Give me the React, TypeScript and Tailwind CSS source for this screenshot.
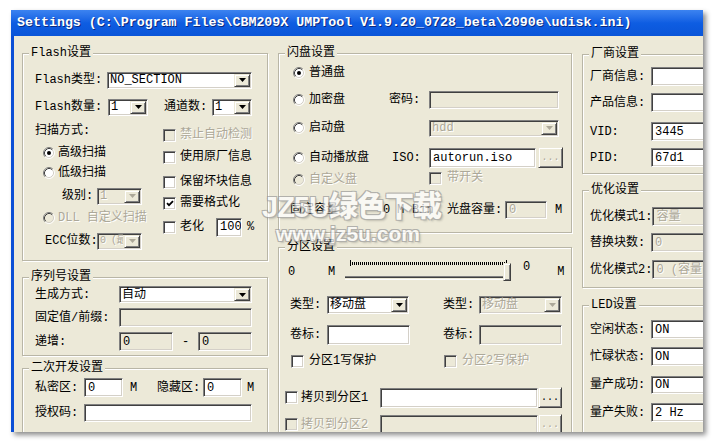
import type { ReactNode } from 'react'

const dis = 'text-[#aca899] [text-shadow:1px_1px_0_#fff]'
const sunken = 'border border-[#808080] border-b-white border-r-white shadow-[inset_1px_1px_0_#404040,inset_-1px_-1px_0_#d4d0c8]'
const raised = 'border border-[#ece9d8] border-b-[#404040] border-r-[#404040] shadow-[inset_1px_1px_0_#fff,inset_-1px_-1px_0_#808080]'

type Box = { className?: string; value?: string; disabled?: boolean; grey?: boolean; tight?: boolean }

function Group({ title, className = '', children }: { title: string; className?: string; children?: ReactNode }) {
    return (
        <div className={`shrink-0 border border-[#b9b6a6] shadow-[inset_1px_1px_0_#fff,1px_1px_0_#fff] ${className}`}>
            <div className="-mt-[9px] ml-[6px] px-[2px] h-[16px] leading-[16px] w-fit bg-[#ece9d8]">{title}</div>
            {children}
        </div>
    )
}

function Row({ className = '', children }: { className?: string; children?: ReactNode }) {
    return <div className={`flex items-center whitespace-nowrap ${className}`}>{children}</div>
}

function Field({ className = '', value = '', disabled = false, grey = false }: Box) {
    return (
        <div className={`flex items-center shrink-0 overflow-hidden whitespace-nowrap pl-[3px] ${sunken} ${disabled ? 'bg-[#ece9d8] ' + dis : grey ? 'bg-[#ece9d8]' : 'bg-white'} ${className}`}>
            {value}
        </div>
    )
}

function Combo({ className = '', value = '', disabled = false, tight = false }: Box) {
    return (
        <div className={`flex items-stretch shrink-0 ${sunken} ${disabled ? 'bg-[#ece9d8] ' + dis : 'bg-white'} ${className}`}>
            <div className={`flex-1 flex items-center pl-[2px] overflow-hidden whitespace-nowrap ${tight ? 'text-[10px] tracking-[-0.5px]' : ''}`}>{value}</div>
            <div className={`w-[16px] m-[1px] flex items-center justify-center bg-[#ece9d8] ${raised}`}>
                <svg width="7" height="4" viewBox="0 0 7 4">
                    <path d="M0 0h7L3.5 4z" fill={disabled ? '#aca899' : '#000'} />
                </svg>
            </div>
        </div>
    )
}

function Dots({ className = '', disabled = false }: Box) {
    return (
        <div className={`flex items-center justify-center shrink-0 bg-[#ece9d8] text-[10px] ${raised} ${disabled ? dis : ''} ${className}`}>
            ...
        </div>
    )
}

function Radio({ checked = false, disabled = false }: { checked?: boolean; disabled?: boolean }) {
    return (
        <svg width="12" height="12" viewBox="0 0 12 12" className="shrink-0">
            <circle cx="6" cy="6" r="5" fill={disabled ? '#ece9d8' : '#fff'} />
            <path d="M9.9 2.1A5.5 5.5 0 0 0 2.1 9.9" fill="none" stroke="#808080" />
            <path d="M9.9 2.1A5.5 5.5 0 0 1 2.1 9.9" fill="none" stroke="#fff" />
            <path d="M9.18 2.82A4.5 4.5 0 0 0 2.82 9.18" fill="none" stroke="#404040" />
            <path d="M9.18 2.82A4.5 4.5 0 0 1 2.82 9.18" fill="none" stroke="#d4d0c8" />
            {checked && <circle cx="6" cy="6" r="2" fill="#000" />}
        </svg>
    )
}

function Check({ checked = false, disabled = false }: { checked?: boolean; disabled?: boolean }) {
    return (
        <div className={`w-[13px] h-[13px] shrink-0 flex items-center justify-center ${sunken} ${disabled ? 'bg-[#ece9d8]' : 'bg-white'}`}>
            {checked && (
                <svg width="8" height="7" viewBox="0 0 8 7">
                    <path d="M1 3.2L3 5.2L7 1.2" stroke="#000" strokeWidth="1.8" fill="none" />
                </svg>
            )}
        </div>
    )
}

export default function App() {
    return (
        <div className="w-[715px] h-[441px] bg-white pt-[10px] pl-[11px] font-['Liberation_Mono','Noto_Sans_CJK_SC',monospace] text-[12px] leading-[16px] text-black">
            <div className="relative w-[692px] h-[422px] overflow-hidden bg-[#ece9d8] flex flex-col shadow-[3px_3px_5px_rgba(0,0,0,0.45)]">
                <div className="h-[26px] shrink-0 flex items-center pl-[6px] bg-linear-to-b from-[#3c83f0] via-[#0e5de2] to-[#0a55d8] text-white font-bold text-[13.3px] [text-shadow:1px_1px_0_#0a2a80] whitespace-nowrap">
                    Settings (C:\Program Files\CBM209X UMPTool V1.9.20_0728_beta\2090e\udisk.ini)
                </div>

                <div className="flex-1 flex gap-[10px] border-l-[3px] border-[#0b4fd6] pl-[8px] pt-[17px]">
                    {/* coluna esquerda */}
                    <div className="w-[246px] shrink-0 flex flex-col">
                        <Group title="Flash设置" className="h-[208px]">
                            <Row className="h-[20px] mt-[9px] pl-[12px]">
                                <span className="w-[72px]">Flash类型:</span>
                                <Combo className="w-[145px] h-[17px]" value="NO_SECTION" />
                            </Row>
                            <Row className="h-[20px] mt-[7px] pl-[12px]">
                                <span className="w-[73px]">Flash数量:</span>
                                <Combo className="w-[40px] h-[17px]" value="1" />
                                <span className="w-[48px] ml-[16px]">通道数:</span>
                                <Combo className="w-[40px] h-[17px]" value="1" />
                            </Row>
                            <div className="flex">
                                <div className="w-[140px] pl-[12px]">
                                    <Row className="h-[20px] mt-[4px]">扫描方式:</Row>
                                    <Row className="h-[20px] mt-[2px] pl-[8px]">
                                        <Radio checked />
                                        <span className="ml-[3px]">高级扫描</span>
                                    </Row>
                                    <Row className="h-[20px] pl-[8px]">
                                        <Radio />
                                        <span className="ml-[3px]">低级扫描</span>
                                    </Row>
                                    <Row className="h-[20px] mt-[3px] pl-[27px]">
                                        <span className="w-[35px]">级别:</span>
                                        <Combo className="w-[45px] h-[17px]" value="1" disabled />
                                    </Row>
                                    <Row className="h-[20px] mt-[2px] pl-[8px]">
                                        <Radio disabled />
                                        <span className={`ml-[3px] ${dis}`}>DLL 自定义扫描</span>
                                    </Row>
                                    <Row className="h-[20px] mt-[3px] pl-[10px]">
                                        <span className="w-[52px]">ECC位数:</span>
                                        <Combo className="w-[45px] h-[17px]" value="0 (最" disabled tight />
                                    </Row>
                                </div>
                                <div className="flex-1">
                                    <Row className="h-[20px] mt-[8px]">
                                        <Check disabled />
                                        <span className={`ml-[4px] ${dis}`}>禁止自动检测</span>
                                    </Row>
                                    <Row className="h-[20px] mt-[2px]">
                                        <Check />
                                        <span className="ml-[4px]">使用原厂信息</span>
                                    </Row>
                                    <Row className="h-[20px] mt-[5px]">
                                        <Check />
                                        <span className="ml-[4px]">保留坏块信息</span>
                                    </Row>
                                    <Row className="h-[20px] mt-[1px]">
                                        <Check checked />
                                        <span className="ml-[4px]">需要格式化</span>
                                    </Row>
                                    <Row className="h-[20px] mt-[4px]">
                                        <Check />
                                        <span className="ml-[4px] w-[36px]">老化</span>
                                        <Field className="w-[26px] h-[19px]" value="100" />
                                        <span className="ml-[5px]">%</span>
                                    </Row>
                                </div>
                            </div>
                        </Group>

                        <Group title="序列号设置" className="h-[79px] mt-[16px]">
                            <Row className="h-[17px] mt-[1px] pl-[12px]">
                                <span className="w-[84px]">生成方式:</span>
                                <Combo className="w-[133px] h-[17px]" value="自动" />
                            </Row>
                            <Row className="h-[19px] mt-[5px] pl-[12px]">
                                <span className="w-[84px]">固定值/前缀:</span>
                                <Field className="w-[133px] h-[19px]" disabled />
                            </Row>
                            <Row className="h-[19px] mt-[5px] pl-[12px]">
                                <span className="w-[84px]">递增:</span>
                                <Field className="w-[54px] h-[19px]" value="0" grey />
                                <span className="w-[25px] text-center">-</span>
                                <Field className="w-[54px] h-[19px]" value="0" grey />
                            </Row>
                        </Group>

                        <Group title="二次开发设置" className="h-[80px] mt-[12px]">
                            <Row className="h-[19px] mt-[2px] pl-[12px]">
                                <span className="w-[49px]">私密区:</span>
                                <Field className="w-[39px] h-[19px]" value="0" />
                                <span className="w-[34px] pl-[7px]">M</span>
                                <span className="w-[46px]">隐藏区:</span>
                                <Field className="w-[39px] h-[19px]" value="0" />
                                <span className="pl-[5px]">M</span>
                            </Row>
                            <Row className="h-[18px] mt-[7px] pl-[12px]">
                                <span className="w-[49px]">授权码:</span>
                                <Field className="w-[168px] h-[18px]" />
                            </Row>
                        </Group>
                    </div>

                    {/* coluna do meio */}
                    <div className="w-[294px] shrink-0 flex flex-col">
                        <Group title="闪盘设置" className="h-[180px]">
                            <Row className="h-[20px] mt-[2px] pl-[14px]">
                                <Radio checked />
                                <span className="ml-[4px]">普通盘</span>
                            </Row>
                            <Row className="h-[20px] mt-[7px] pl-[14px]">
                                <div className="w-[96px] flex items-center">
                                    <Radio />
                                    <span className="ml-[4px]">加密盘</span>
                                </div>
                                <span className="w-[40px]">密码:</span>
                                <Field className="w-[130px] h-[18px]" disabled />
                            </Row>
                            <Row className="h-[20px] mt-[8px] pl-[14px]">
                                <div className="w-[136px] flex items-center">
                                    <Radio />
                                    <span className="ml-[4px]">启动盘</span>
                                </div>
                                <Combo className="w-[130px] h-[17px]" value="hdd" disabled />
                            </Row>
                            <Row className="h-[21px] mt-[9px] pl-[14px]">
                                <div className="w-[99px] flex items-center">
                                    <Radio />
                                    <span className="ml-[4px]">自动播放盘</span>
                                </div>
                                <span className="w-[37px]">ISO:</span>
                                <Field className="w-[107px] h-[20px]" value="autorun.iso" />
                                <Dots className="w-[25px] h-[21px] ml-[2px]" disabled />
                            </Row>
                            <Row className="h-[20px] mt-[2px] pl-[14px]">
                                <div className="w-[136px] flex items-center">
                                    <Radio disabled />
                                    <span className={`ml-[4px] ${dis}`}>自定义盘</span>
                                </div>
                                <div className="flex items-center -mt-[4px]">
                                    <Check disabled />
                                    <span className={`ml-[5px] ${dis}`}>带开关</span>
                                </div>
                            </Row>
                            <Row className="h-[20px] mt-[10px] pl-[11px]">
                                <span className="w-[93px]">固定容量</span>
                                <span className="w-[14px]">0</span>
                                <span className="w-[15px]">M</span>
                                <span className="w-[35px]">Bin</span>
                                <span className="w-[58px]">光盘容量:</span>
                                <Field className="w-[42px] h-[18px]" value="0" disabled />
                                <span className="pl-[8px]">M</span>
                            </Row>
                        </Group>

                        <Group title="分区设置" className="h-[200px] mt-[14px]">
                            <div className="flex items-start h-[30px] pl-[9px] whitespace-nowrap">
                                <span className="w-[40px] mt-[9px]">0</span>
                                <span className="w-[17px] mt-[9px]">M</span>
                                <div className="relative w-[166px] h-[30px] shrink-0">
                                    <div className="absolute left-[5px] top-[7px] w-[157px] h-[3px] bg-[repeating-linear-gradient(90deg,#000_0_1px,transparent_1px_2px)]" />
                                    <div className="absolute left-[5px] top-[5px] w-[1px] h-[6px] bg-black" />
                                    <div className="absolute left-[161px] top-[5px] w-[1px] h-[6px] bg-black" />
                                    <div className="absolute left-0 top-[21px] w-[163px] h-[4px] border-t border-[#808080] border-b border-b-white shadow-[inset_0_1px_0_#404040]" />
                                    <div className={`absolute left-[158px] top-[8px] w-[8px] h-[18px] bg-[#ece9d8] ${raised}`} />
                                </div>
                                <span className="ml-[12px] mt-[4px]">0</span>
                                <span className="ml-[27px] mt-[9px]">M</span>
                            </div>
                            <Row className="h-[20px] mt-[10px] pl-[11px]">
                                <span className="w-[37px]">类型:</span>
                                <Combo className="w-[82px] h-[18px]" value="移动盘" />
                                <span className="w-[36px] ml-[34px]">类型:</span>
                                <Combo className="w-[83px] h-[18px]" value="移动盘" disabled />
                            </Row>
                            <Row className="h-[20px] mt-[10px] pl-[11px]">
                                <span className="w-[37px]">卷标:</span>
                                <Field className="w-[83px] h-[20px]" />
                                <span className="w-[36px] ml-[33px]">卷标:</span>
                                <Field className="w-[83px] h-[20px]" disabled />
                            </Row>
                            <Row className="h-[20px] mt-[6px] pl-[12px]">
                                <div className="w-[153px] flex items-center">
                                    <Check />
                                    <span className="ml-[5px]">分区1写保护</span>
                                </div>
                                <Check disabled />
                                <span className={`ml-[5px] ${dis}`}>分区2写保护</span>
                            </Row>
                            <Row className="h-[21px] mt-[16px] pl-[6px]">
                                <div className="w-[95px] flex items-center">
                                    <Check />
                                    <span className="ml-[3px]">拷贝到分区1</span>
                                </div>
                                <Field className="w-[158px] h-[20px]" />
                                <Dots className="w-[24px] h-[21px]" />
                            </Row>
                            <Row className="h-[21px] mt-[6px] pl-[6px]">
                                <div className="w-[95px] flex items-center">
                                    <Check disabled />
                                    <span className={`ml-[3px] ${dis}`}>拷贝到分区2</span>
                                </div>
                                <Field className="w-[158px] h-[20px]" disabled />
                                <Dots className="w-[24px] h-[21px]" disabled />
                            </Row>
                        </Group>
                    </div>

                    {/* coluna direita */}
                    <div className="w-[160px] shrink-0 flex flex-col">
                        <Group title="厂商设置" className="h-[120px] mt-[1px]">
                            <Row className="h-[19px] mt-[5px] pl-[7px]">
                                <span className="w-[67px]">厂商信息:</span>
                                <Field className="w-[90px] h-[19px]" />
                            </Row>
                            <Row className="h-[19px] mt-[7px] pl-[7px]">
                                <span className="w-[67px]">产品信息:</span>
                                <Field className="w-[90px] h-[19px]" />
                            </Row>
                            <Row className="h-[19px] mt-[10px] pl-[7px]">
                                <span className="w-[67px]">VID:</span>
                                <Field className="w-[90px] h-[19px]" value="3445" />
                            </Row>
                            <Row className="h-[19px] mt-[7px] pl-[7px]">
                                <span className="w-[67px]">PID:</span>
                                <Field className="w-[90px] h-[19px]" value="67d1" />
                            </Row>
                        </Group>

                        <Group title="优化设置" className="h-[98px] mt-[16px]">
                            <Row className="h-[19px] mt-[9px] pl-[7px]">
                                <span className="w-[67px]">优化模式1:</span>
                                <Field className="w-[90px] h-[19px]" value="容量" disabled />
                            </Row>
                            <Row className="h-[19px] mt-[7px] pl-[7px]">
                                <span className="w-[67px]">替换块数:</span>
                                <Field className="w-[90px] h-[19px]" value="0" disabled />
                            </Row>
                            <Row className="h-[19px] mt-[8px] pl-[7px]">
                                <span className="w-[67px]">优化模式2:</span>
                                <Field className="w-[90px] h-[19px]" value="0 (容量" disabled />
                            </Row>
                        </Group>

                        <Group title="LED设置" className="h-[140px] mt-[17px]">
                            <Row className="h-[19px] mt-[7px] pl-[7px]">
                                <span className="w-[67px]">空闲状态:</span>
                                <Field className="w-[90px] h-[19px]" value="ON" />
                            </Row>
                            <Row className="h-[19px] mt-[8px] pl-[7px]">
                                <span className="w-[67px]">忙碌状态:</span>
                                <Field className="w-[90px] h-[19px]" value="ON" />
                            </Row>
                            <Row className="h-[18px] mt-[10px] pl-[7px]">
                                <span className="w-[67px]">量产成功:</span>
                                <Field className="w-[90px] h-[18px]" value="ON" />
                            </Row>
                            <Row className="h-[19px] mt-[9px] pl-[7px]">
                                <span className="w-[67px]">量产失败:</span>
                                <Field className="w-[90px] h-[19px]" value="2 Hz" />
                            </Row>
                        </Group>
                    </div>
                </div>

                {/* marca d'agua */}
                <div className="absolute left-[251px] top-[181px] pointer-events-none select-none opacity-70 text-white font-['Liberation_Sans','Noto_Sans_CJK_SC',sans-serif] font-black whitespace-nowrap [text-shadow:-1px_-1px_0_#999,1px_-1px_0_#999,-1px_1px_0_#999,1px_1px_0_#999,2px_2px_2px_rgba(0,0,0,0.25)]">
                    <div className="text-[29px] leading-[32px] tracking-[-1px]">JZ5U绿色下载</div>
                    <div className="text-[21px] leading-[22px] pl-[14px]">www.jz5u.com</div>
                </div>
            </div>
        </div>
    )
}
